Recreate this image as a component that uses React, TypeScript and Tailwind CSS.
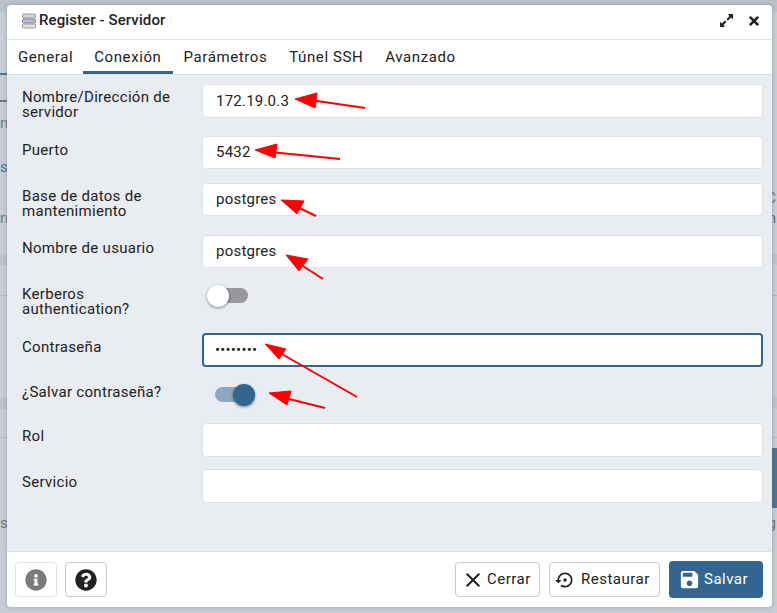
import { FaExpandAlt, FaInfoCircle, FaQuestionCircle, FaTimes } from "react-icons/fa";

const font = { fontFamily: "Roboto, sans-serif" };

const labelCls = "w-[180px] shrink-0 pr-2 text-[15px] leading-[15px] tracking-[0.3px] text-[#222222]";

const Field = ({
  label,
  value,
  h = "h-[33px]",
  mb = "",
  pt = "pt-[6px]",
  focus = false,
}: {
  label: string;
  value?: string;
  h?: string;
  mb?: string;
  pt?: string;
  focus?: boolean;
}) => (
  <div className={`flex ${h} ${mb}`}>
    <div className={`${labelCls} ${pt}`}>{label}</div>
    <div
      className={`flex h-full flex-1 items-center rounded bg-white text-[15px] tracking-[0.22px] text-[#222222] ${
        focus ? "border-2 border-[#326690] pl-[11px]" : "border border-[#dde0e6] pl-[13px]"
      }`}
    >
      {value}
    </div>
  </div>
);

const Toggle = ({ on }: { on: boolean }) => (
  <div className={`relative h-[15px] w-[40px] rounded-full ${on ? "bg-[#8aa8c2]" : "bg-[#97979c]"}`}>
    <div className={`absolute -top-[3px] h-[22px] w-[22px] rounded-full shadow-[0_1px_3px_rgba(0,0,0,0.45)] ${on ? "right-0 bg-[#326690]" : "-left-[1px] bg-white"}`} />
  </div>
);

const Arrows = () => (
  <svg className="absolute left-0 top-0" width="777" height="613" fill="#ff0000" stroke="#ff0000">
    <line x1="365" y1="108" x2="310" y2="100" strokeWidth="2" />
    <polygon points="295,99 317,93 315,108" />
    <line x1="340" y1="159" x2="270" y2="152" strokeWidth="2" />
    <polygon points="255,150 277,144 275,158" />
    <line x1="316" y1="216" x2="295" y2="206" strokeWidth="2" />
    <polygon points="281,200 304,201 297,214" />
    <line x1="323" y1="279" x2="298" y2="263" strokeWidth="2" />
    <polygon points="286,255 308,259 299,271" />
    <line x1="357" y1="397" x2="280" y2="353" strokeWidth="2" />
    <polygon points="265,344 286,349 279,359" />
    <line x1="325" y1="408" x2="285" y2="398" strokeWidth="2" />
    <polygon points="269,393 291,391 287,405" />
  </svg>
);

// what shows of the page behind the modal
const Backdrop = () => (
  <div className="absolute inset-0 text-[15px] text-[#6f7780]">
    <div className="absolute left-0 right-0 top-[12px] h-[601px] bg-[#c9cdd6]" />
    <div className="absolute left-0 right-0 top-[254px] h-[11px] bg-[#bfc3cc]" />
    <div className="absolute left-0 right-0 top-[295px] h-px bg-[#b4b8c0]" />
    <div className="absolute left-0 right-0 top-[397px] h-[12px] bg-[#bfc3cc]" />
    <div className="absolute left-0 right-0 top-[437px] h-px bg-[#b4b8c0]" />
    <div className="absolute left-0 top-[73px] h-[2px] w-[7px] bg-[#4d7396]" />
    <div className="absolute left-0 top-[100px] h-[2px] w-[7px] bg-[#6f7780]" />
    <span className="absolute left-0 top-[112px]">n</span>
    <span className="absolute left-0 top-[156px] text-[#4d7396]">s</span>
    <span className="absolute left-0 top-[207px]">rr</span>
    <span className="absolute left-0 top-[512px]">s</span>
    <span className="absolute right-[1px] top-[187px]">C</span>
    <span className="absolute right-[1px] top-[207px] text-[#4d7396]">n</span>
    <div className="absolute left-[772px] right-0 top-[448px] h-[60px] bg-[#4d7396]" />
    <span className="absolute right-[1px] top-[512px]">g</span>
  </div>
);

export default function App() {
  return (
    <div className="relative h-[613px] w-[777px] overflow-hidden bg-[#bcc1cb]" style={font}>
      <Backdrop />
      <div className="relative pl-[7px] pt-[5px]">
        <div className="flex h-[602px] w-[765px] flex-col overflow-hidden rounded bg-white shadow-[0_0_4px_rgba(60,70,90,0.35)]">
          <div className="flex h-[35px] shrink-0 items-center border-b border-[#dde0e6] pb-[3px] pl-[15px] pr-[11px]">
            <svg width="14" height="16" viewBox="0 0 14 16" className="mr-[3px]">
              <rect x="0.5" y="1" width="13" height="4" rx="1" fill="#d6d6d8" stroke="#86868c" strokeWidth="0.8" />
              <rect x="0.5" y="6" width="13" height="4" rx="1" fill="#b9b9d0" stroke="#7a7a90" strokeWidth="0.8" />
              <rect x="0.5" y="11" width="13" height="4" rx="1" fill="#e4e4e4" stroke="#86868c" strokeWidth="0.8" />
            </svg>
            <span className="flex-1 text-[15px] font-medium tracking-[0.1px] text-[#222222]">Register - Servidor</span>
            <FaExpandAlt className="mr-[13px] text-[15px] text-[#222222]" />
            <FaTimes className="text-[14px] text-[#222222]" />
          </div>

          <div className="flex h-[35px] shrink-0 border-b border-[#dde0e6] text-[15px] tracking-[0.6px] text-[#222222]">
            <div className="flex items-center pl-[11px] pr-[10px]">General</div>
            <div className="flex items-center border-b-[3px] border-[#326690] px-[11px] pt-[3px]">Conexión</div>
            <div className="flex items-center px-[11px]">Parámetros</div>
            <div className="flex items-center px-[11px]">Túnel SSH</div>
            <div className="flex items-center px-[11px]">Avanzado</div>
          </div>

          <div className="flex-1 bg-[#e9ecf1] pl-[15px] pr-[9px] pt-[9px]">
            <Field label="Nombre/Dirección de servidor" value="172.19.0.3" h="h-[34px]" mb="mb-[18px]" />
            <Field label="Puerto" value="5432" mb="mb-[14px]" pt="pt-[7px]" />
            <Field label="Base de datos de mantenimiento" value="postgres" mb="mb-[19px]" />
            <Field label="Nombre de usuario" value="postgres" mb="mb-[13px]" />
            <div className="flex h-[52px]">
              <div className={`${labelCls} pt-[6px]`}>Kerberos authentication?</div>
              <div className="ml-[6px] mt-[7px]">
                <Toggle on={false} />
              </div>
            </div>
            <Field label="Contraseña" value="••••••••" h="h-[34px]" pt="pt-[7px]" focus />
            <div className="flex h-[56px]">
              <div className={`${labelCls} pt-[18px]`}>¿Salvar contraseña?</div>
              <div className="ml-[13px] mt-[20px]">
                <Toggle on />
              </div>
            </div>
            <Field label="Rol" h="h-[34px]" mb="mb-[12px]" />
            <Field label="Servicio" h="h-[34px]" />
          </div>

          <div className="flex h-[56px] shrink-0 items-center border-t border-[#dde0e6] pl-[8px] pr-[9px] text-[15px] tracking-[0.5px] text-[#222222]">
            <button className="flex h-[35px] w-[42px] items-center justify-center rounded border border-[#dde0e6]">
              <FaInfoCircle className="text-[22px] text-[#7b7b7b]" />
            </button>
            <button className="ml-[8px] flex h-[35px] w-[42px] items-center justify-center rounded border border-[#c5c9d2]">
              <FaQuestionCircle className="text-[22px] text-[#222222]" />
            </button>
            <button className="ml-auto flex h-[35px] w-[85px] items-center gap-[2px] rounded border border-[#c5c9d2] pl-[5px]">
              <svg width="24" height="24" viewBox="0 0 24 24" fill="#222222">
                <path d="M19 6.41L17.59 5 12 10.59 6.41 5 5 6.41 10.59 12 5 17.59 6.41 19 12 13.41 17.59 19 19 17.59 13.41 12z" />
              </svg>
              Cerrar
            </button>
            <button className="ml-[9px] flex h-[35px] w-[111px] items-center gap-[6px] rounded border border-[#c5c9d2] pl-[5px]">
              <svg width="20" height="20" viewBox="0 0 24 24" fill="#222222">
                <path d="M14 12c0-1.1-.9-2-2-2s-2 .9-2 2 .9 2 2 2 2-.9 2-2zm-2-9c-4.97 0-9 4.03-9 9H0l4 4 4-4H5c0-3.87 3.13-7 7-7s7 3.13 7 7-3.13 7-7 7c-1.51 0-2.91-.49-4.06-1.3l-1.42 1.44C8.04 20.3 9.94 21 12 21c4.97 0 9-4.03 9-9s-4.03-9-9-9z" />
              </svg>
              Restaurar
            </button>
            <button className="ml-[9px] flex h-[37px] w-[94px] items-center gap-[3px] rounded bg-[#326690] pl-[9px] text-white">
              <svg width="23" height="23" viewBox="0 0 24 24" fill="#ffffff">
                <path d="M17 3H5c-1.11 0-2 .9-2 2v14c0 1.1.89 2 2 2h14c1.1 0 2-.9 2-2V7l-4-4zm-5 16c-1.66 0-3-1.34-3-3s1.34-3 3-3 3 1.34 3 3-1.34 3-3 3zm3-10H5V5h10v4z" />
              </svg>
              Salvar
            </button>
          </div>
        </div>
      </div>
      <Arrows />
    </div>
  );
}
